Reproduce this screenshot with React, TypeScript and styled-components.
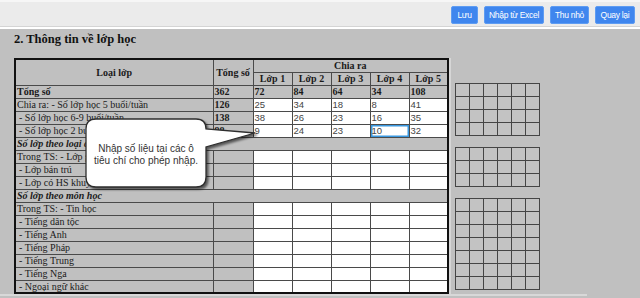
import React from "react";
import styled, { createGlobalStyle, css } from "styled-components";

const GlobalStyle = createGlobalStyle`
  html, body {
    margin: 0;
    padding: 0;
  }
  body {
    width: 640px;
    height: 298px;
    overflow: hidden;
    background: #c0c0c0;
    font-family: "Liberation Serif", "Times New Roman", serif;
  }
`;

const Page = styled.div`
  position: relative;
  width: 640px;
  height: 298px;
  overflow: hidden;
`;

const Toolbar = styled.div`
  box-sizing: border-box;
  height: 27px;
  background: #ebebeb;
  border-top: 2px solid #f6f6f6;
  border-bottom: 1px solid #d4d4d4;
  display: flex;
  justify-content: flex-end;
  align-items: center;
  gap: 6px;
  padding: 2px 5px 0 0;
`;

const ToolButton = styled.button<{ w: number }>`
  box-sizing: border-box;
  width: ${(p) => p.w}px;
  height: 18px;
  padding: 0;
  border: 1px solid #5e9cf2;
  border-radius: 2px;
  background: #3f86ee;
  color: #fff;
  font-family: "Liberation Sans", Arial, sans-serif;
  font-size: 8.5px;
  letter-spacing: -0.3px;
  cursor: pointer;
`;

const Main = styled.div`
  border-top: 2px solid #ffffff;
  padding: 3px 0 0 0;
`;

const Title = styled.h2`
  margin: 0 0 11px 14px;
  font-size: 12.5px;
  line-height: 15px;
  font-weight: bold;
  color: #111;
`;

const Content = styled.div`
  display: flex;
  align-items: flex-start;
  gap: 6px;
  width: 587px;
  padding-left: 14px;
  box-sizing: border-box;
  border-bottom: 2px solid #d8d8d8;
`;

const Table = styled.table`
  border-collapse: collapse;
  table-layout: fixed;
  width: 434px;
  border: 2px solid #111;
  box-shadow: 2px 0 0 #d6d6d6;
  font-size: 10px;
  color: #1a1a1a;
`;

const Row = styled.tr`
  height: 13px;
`;

const HeadCell = styled.th`
  border: 1px solid #4a4a4a;
  background: #c0c0c0;
  font-weight: bold;
  font-size: 10px;
  line-height: 11px;
  padding: 0;
  text-align: center;
`;

const Cell = styled.td<{ white?: boolean; strong?: boolean; indent?: number; focus?: boolean }>`
  border: 1px solid #4a4a4a;
  background: ${(p) => (p.white ? "#ffffff" : "#c0c0c0")};
  padding: 0 0 0 ${(p) => p.indent ?? 1}px;
  line-height: 11px;
  white-space: nowrap;
  overflow: hidden;
  font-weight: ${(p) => (p.strong ? "bold" : "normal")};
  ${(p) =>
    p.focus &&
    css`
      box-shadow: inset 0 0 0 1.5px #3a98df;
    `}
`;

const Value = styled.span`
  font-family: "Liberation Sans", Arial, sans-serif;
  font-size: 9.5px;
  color: #444;
`;

const SectionCell = styled.td`
  border: 1px solid #4a4a4a;
  background: #c0c0c0;
  padding: 0 0 0 1px;
  line-height: 11px;
  font-weight: bold;
  font-style: italic;
  white-space: nowrap;
`;

const Side = styled.div`
  display: flex;
  flex-direction: column;
  gap: 11px;
  padding-top: 25px;
`;

const MiniGrid = styled.div<{ rows: number }>`
  display: grid;
  grid-template-columns: repeat(6, 13px);
  grid-template-rows: repeat(${(p) => p.rows}, 12px);
  gap: 1px;
  padding: 1px;
  background: #454545;
`;

const MiniCell = styled.div`
  background: #c3c3c3;
`;

const CalloutShape = styled.svg`
  position: absolute;
  left: 80px;
  top: 112px;
  width: 185px;
  height: 85px;
  overflow: visible;
  filter: drop-shadow(2px 2px 1px rgba(0, 0, 0, 0.55));
`;

const CalloutText = styled.div`
  position: absolute;
  left: 86px;
  top: 119px;
  width: 120px;
  height: 68px;
  box-sizing: border-box;
  padding-top: 4px;
  display: flex;
  align-items: center;
  justify-content: center;
  text-align: center;
  font-family: "Liberation Sans", Arial, sans-serif;
  font-size: 10px;
  line-height: 12px;
  color: #333;
`;

type DataRow =
  | { kind: "section"; label: string }
  | {
      kind: "data";
      label: string;
      indent?: number;
      total?: string;
      values?: string[];
      totalRow?: boolean;
      focus?: number;
    };

const rows: DataRow[] = [
  { kind: "data", label: "Tổng số", total: "362", values: ["72", "84", "64", "34", "108"], totalRow: true },
  { kind: "data", label: "Chia ra: - Số lớp học 5 buổi/tuần", total: "126", values: ["25", "34", "18", "8", "41"] },
  { kind: "data", label: " - Số lớp học 6-9 buổi/tuần", indent: 3, total: "138", values: ["38", "26", "23", "16", "35"] },
  { kind: "data", label: " - Số lớp học 2 buổi/tuần", indent: 3, total: "98", values: ["9", "24", "23", "10", "32"], focus: 3 },
  { kind: "section", label: "Số lớp theo loại đối tượng" },
  { kind: "data", label: "Trong TS: - Lớp ghép" },
  { kind: "data", label: " - Lớp bán trú", indent: 3 },
  { kind: "data", label: " - Lớp có HS khuyết tật", indent: 3 },
  { kind: "section", label: "Số lớp theo môn học" },
  { kind: "data", label: "Trong TS: - Tin học" },
  { kind: "data", label: " - Tiếng dân tộc", indent: 3 },
  { kind: "data", label: " - Tiếng Anh", indent: 3 },
  { kind: "data", label: " - Tiếng Pháp", indent: 3 },
  { kind: "data", label: " - Tiếng Trung", indent: 3 },
  { kind: "data", label: " - Tiếng Nga", indent: 3 },
  { kind: "data", label: " - Ngoại ngữ khác", indent: 3 },
];

const grades = ["Lớp 1", "Lớp 2", "Lớp 3", "Lớp 4", "Lớp 5"];

const Grid = ({ rows }: { rows: number }) => (
  <MiniGrid rows={rows}>
    {Array.from({ length: rows * 6 }).map((_, i) => (
      <MiniCell key={i} />
    ))}
  </MiniGrid>
);

export default function App() {
  return (
    <Page>
      <GlobalStyle />
      <Toolbar>
        <ToolButton w={27}>Lưu</ToolButton>
        <ToolButton w={60}>Nhập từ Excel</ToolButton>
        <ToolButton w={39}>Thu nhỏ</ToolButton>
        <ToolButton w={40}>Quay lại</ToolButton>
      </Toolbar>
      <Main>
        <Title>2. Thông tin về lớp học</Title>
        <Content>
          <Table>
            <colgroup>
              <col style={{ width: 198 }} />
              <col style={{ width: 40 }} />
              {grades.map((g) => (
                <col key={g} style={{ width: 39 }} />
              ))}
            </colgroup>
            <thead>
              <Row>
                <HeadCell rowSpan={2}>Loại lớp</HeadCell>
                <HeadCell rowSpan={2}>Tổng số</HeadCell>
                <HeadCell colSpan={5}>Chia ra</HeadCell>
              </Row>
              <Row>
                {grades.map((g) => (
                  <HeadCell key={g}>{g}</HeadCell>
                ))}
              </Row>
            </thead>
            <tbody>
              {rows.map((r, i) =>
                r.kind === "section" ? (
                  <Row key={i}>
                    <SectionCell colSpan={7}>{r.label}</SectionCell>
                  </Row>
                ) : (
                  <Row key={i}>
                    <Cell strong={r.totalRow} indent={r.indent}>
                      {r.label}
                    </Cell>
                    <Cell strong>{r.total ?? ""}</Cell>
                    {grades.map((g, j) =>
                      r.totalRow ? (
                        <Cell key={g} strong>
                          {r.values?.[j]}
                        </Cell>
                      ) : (
                        <Cell key={g} white focus={r.focus === j}>
                          <Value>{r.values?.[j] ?? ""}</Value>
                        </Cell>
                      )
                    )}
                  </Row>
                )
              )}
            </tbody>
          </Table>
          <Side>
            <Grid rows={4} />
            <Grid rows={3} />
            <Grid rows={7} />
          </Side>
        </Content>
      </Main>
      <CalloutShape viewBox="0 0 185 85">
        <path
          d="M16,7 H116 Q126,7 126,17 L175,21 L126,35 V65 Q126,75 116,75 H16 Q6,75 6,65 V17 Q6,7 16,7 Z"
          fill="#ffffff"
          stroke="#2e2e2e"
          strokeWidth="1.3"
        />
      </CalloutShape>
      <CalloutText>
        Nhập số liệu tại các ô
        <br />
        tiêu chí cho phép nhập.
      </CalloutText>
    </Page>
  );
}
